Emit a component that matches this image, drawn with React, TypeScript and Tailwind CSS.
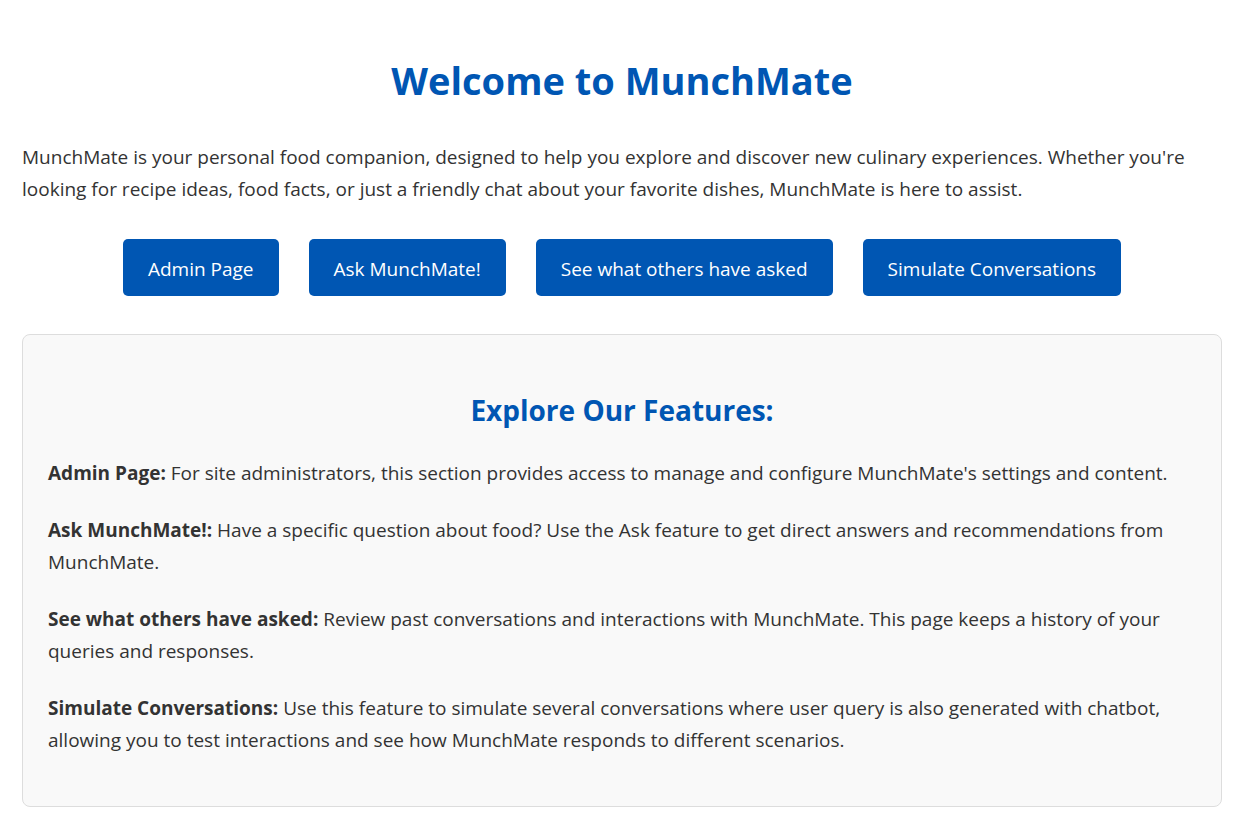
export default function App() {
  const buttons = ['Admin Page', 'Ask MunchMate!', 'See what others have asked', 'Simulate Conversations']

  const features = [
    {
      title: 'Admin Page:',
      text: "For site administrators, this section provides access to manage and configure MunchMate's settings and content.",
    },
    {
      title: 'Ask MunchMate!:',
      text: 'Have a specific question about food? Use the Ask feature to get direct answers and recommendations from MunchMate.',
    },
    {
      title: 'See what others have asked:',
      text: 'Review past conversations and interactions with MunchMate. This page keeps a history of your queries and responses.',
    },
    {
      title: 'Simulate Conversations:',
      text: 'Use this feature to simulate several conversations where user query is also generated with chatbot, allowing you to test interactions and see how MunchMate responds to different scenarios.',
    },
  ]

  return (
    <div
      className="min-h-screen bg-white pl-[22px] pr-[18px] pt-[56px] text-[#333]"
      style={{ fontFamily: "'Segoe UI', 'Open Sans', 'Noto Sans', sans-serif" }}
    >
      <h1 className="text-center text-[38px] font-bold leading-[48px] text-[#0056b3]">Welcome to MunchMate</h1>

      <p className="mt-[37px] text-[19px] leading-[32px]">
        MunchMate is your personal food companion, designed to help you explore and discover new culinary experiences.
        Whether you're looking for recipe ideas, food facts, or just a friendly chat about your favorite dishes, MunchMate
        is here to assist.
      </p>

      <div className="mt-[34px] flex justify-center gap-[30px]">
        {buttons.map(b => (
          <button
            key={b}
            className="h-[57px] rounded-[5px] bg-[#0056b3] px-[25px] pt-[3px] text-[19px] text-white"
          >
            {b}
          </button>
        ))}
      </div>

      <div className="mt-[38px] rounded-[8px] border border-[#ddd] bg-[#f9f9f9] px-[25px] pt-[58px] pb-[50px]">
        <h2 className="text-center text-[28px] font-bold leading-[34px] text-[#0056b3]">Explore Our Features:</h2>
        <div className="mt-[30px] flex flex-col gap-[25px]">
          {features.map(f => (
            <p key={f.title} className="text-[19px] leading-[32px]">
              <strong className="font-bold">{f.title}</strong> {f.text}
            </p>
          ))}
        </div>
      </div>
    </div>
  )
}
